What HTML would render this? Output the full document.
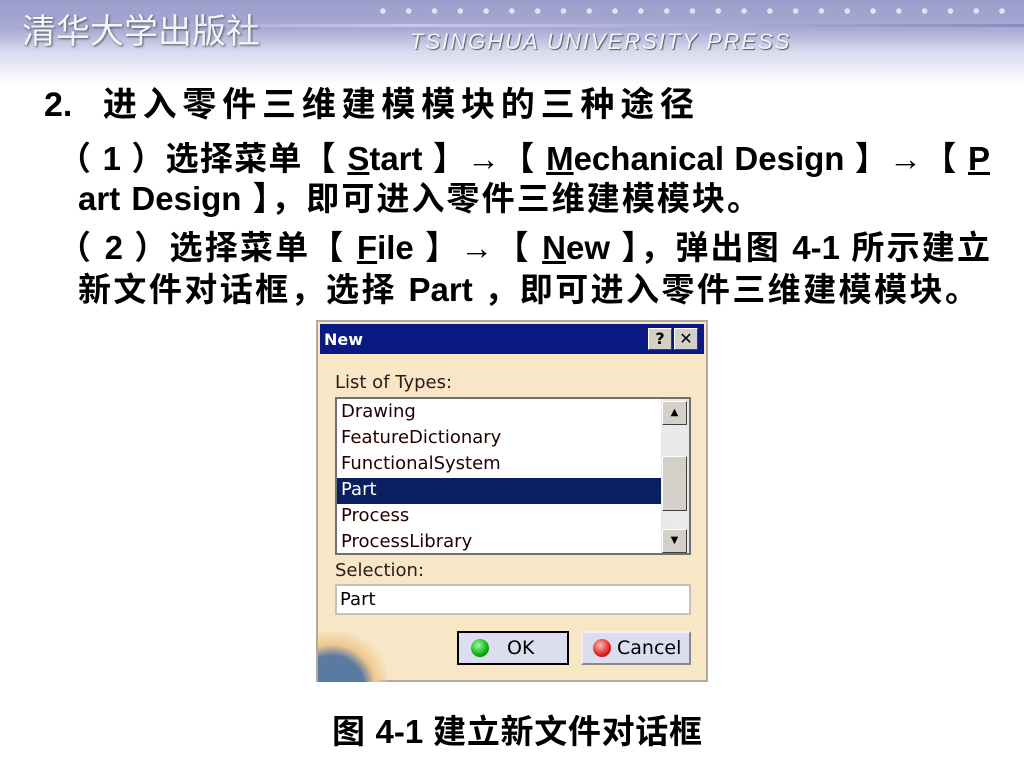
<!DOCTYPE html>
<html><head><meta charset="utf-8"><style>
*{margin:0;padding:0;box-sizing:border-box}
body{width:1024px;height:768px;overflow:hidden;background:#fff;position:relative;font-family:"Liberation Sans","Noto Sans CJK SC",sans-serif}
.hdr{position:absolute;left:0;top:0;width:1024px;height:85px;background:linear-gradient(#9b9dcb 0%,#a9abd4 35%,#d8d9ee 60%,#fff 100%)}
.t{position:absolute;font-weight:bold;color:#000;white-space:nowrap;text-align:justify;text-align-last:justify;overflow:visible}
u{text-decoration:underline}
.dlg{position:absolute;left:316px;top:320px;width:392px;height:362px;background:#f7e7c6;border:2px solid #b0aaa0}
.tb{position:absolute;left:2px;top:2px;width:384px;height:30px;background:#0a1a82;color:#fff;font:bold 16px "DejaVu Sans",sans-serif;padding:6px 4px}
.bx{position:absolute;top:4px;width:24px;height:22px;background:#d4d0c8;border:1px solid #fff;border-right-color:#404040;border-bottom-color:#404040;color:#000;font:bold 16px "DejaVu Sans",sans-serif;text-align:center;line-height:20px}
.lbl{position:absolute;font:18px "DejaVu Sans",sans-serif;color:#2a1a1a}
.list{position:absolute;left:17px;top:75px;width:356px;height:158px;background:#fff;border:2px solid #707070}
.it{position:absolute;left:4px;font:18px "DejaVu Sans",sans-serif;color:#200}
.btn{position:absolute;top:309px;height:34px;background:#ddddf0;border:2px solid #000;font:19px "DejaVu Sans",sans-serif;line-height:30px}
</style></head><body>
<div class="hdr"></div>
<div class="t" style="left:22px;top:4px;font-size:34px;font-weight:normal;color:#f4f4fa;text-shadow:1px 1px 2px #555;text-align-last:auto">清华大学出版社</div>
<div style="position:absolute;left:150px;top:24px;width:874px;height:3px;background:linear-gradient(90deg,rgba(255,255,255,0),#c8c9e6 30%,#8a8cc0)"></div>
<div style="position:absolute;left:370px;top:6px;width:650px;height:10px;background:radial-gradient(circle,#e3e3f2 2.5px,transparent 3px) 0 0/25.8px 10px"></div>
<div class="t" style="left:410px;top:29px;font-size:22px;letter-spacing:2px;font-style:italic;font-weight:normal;color:#f2f2fa;text-shadow:1px 1px 1px #555;text-align-last:auto">TSINGHUA UNIVERSITY PRESS</div>

<div class="t" style="left:44px;top:77px;width:650px;font-size:34px">2.&nbsp; 进入零件三维建模模块的三种途径</div>
<div class="t" style="left:58px;top:132px;width:932px;font-size:33px">（ 1 ）选择菜单【 <u>S</u>tart 】→【 <u>M</u>echanical Design 】→【 <u>P</u></div>
<div class="t" style="left:78px;top:172px;width:682px;font-size:33px">art Design 】，即可进入零件三维建模模块。</div>
<div class="t" style="left:58px;top:221px;width:932px;font-size:33px">（ 2 ）选择菜单【 <u>F</u>ile 】→【 <u>N</u>ew 】，弹出图 4-1 所示建立</div>
<div class="t" style="left:78px;top:263px;width:900px;font-size:33px">新文件对话框，选择 Part ，即可进入零件三维建模模块。</div>

<div class="dlg">
<div class="tb">New<div class="bx" style="left:328px">?</div><div class="bx" style="left:354px">✕</div></div>
<div class="lbl" style="left:17px;top:50px">List of Types:</div>
<div class="list">
<div class="it" style="top:2px">Drawing</div>
<div class="it" style="top:28px">FeatureDictionary</div>
<div class="it" style="top:54px">FunctionalSystem</div>
<div style="position:absolute;left:0;top:79px;width:324px;height:26px;background:#0b2060"></div>
<div class="it" style="top:80px;color:#fff">Part</div>
<div class="it" style="top:106px">Process</div>
<div class="it" style="top:132px">ProcessLibrary</div>
<div style="position:absolute;left:324px;top:0;width:28px;height:154px;background:repeating-linear-gradient(45deg,#e0e0e0 0 1px,#f4f4f4 1px 2px)"></div>
<div class="bx" style="left:325px;top:2px;height:24px;width:25px;font-size:10px;line-height:22px">▲</div>
<div class="bx" style="left:325px;top:57px;height:55px;width:25px"></div>
<div class="bx" style="left:325px;top:130px;height:24px;width:25px;font-size:10px;line-height:22px">▼</div>
</div>
<div class="lbl" style="left:17px;top:238px">Selection:</div>
<div style="position:absolute;left:17px;top:262px;width:356px;height:31px;background:#fff;border:2px solid #c8c0b0;font:18px 'DejaVu Sans',sans-serif;padding:3px 3px">Part</div>
<div style="position:absolute;left:0;top:310px;width:70px;height:50px;background:radial-gradient(ellipse at 20% 110%,#5a7aa0 0 40%,#f0c890 55%,transparent 75%)"></div>
<div class="btn" style="left:139px;width:112px;padding-left:48px"><span style="position:absolute;left:12px;top:6px;width:18px;height:18px;border-radius:50%;background:radial-gradient(circle at 40% 35%,#9f9,#1a1 60%,#060)"></span>OK</div>
<div class="btn" style="left:263px;width:110px;border-color:#f0f0f0 #888 #888 #f0f0f0;padding-left:34px"><span style="position:absolute;left:10px;top:6px;width:18px;height:18px;border-radius:50%;background:radial-gradient(circle at 40% 35%,#fbb,#d22 60%,#800)"></span>Cancel</div>
</div>

<div class="t" style="left:332px;top:705px;width:370px;font-size:33px">图 4-1 建立新文件对话框</div>
</body></html>
